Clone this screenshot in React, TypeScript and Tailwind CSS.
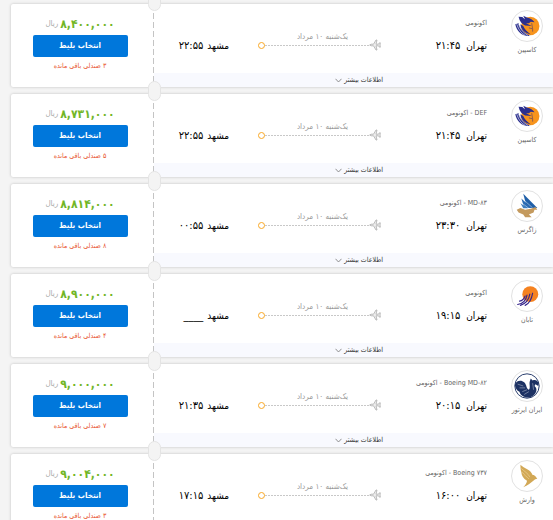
import type { ReactNode } from "react";

type Flight = {
  airline: string;
  logo: ReactNode;
  cabin: string;
  departure: string;
  arrival: string;
  price: string;
  seats: string;
};

function CaspianLogo() {
  return (
    <svg viewBox="0 0 32 32" className="size-full" aria-hidden="true">
      <circle cx="19.5" cy="16" r="9.8" fill="#f7941d" />
      <path d="M7 6 L11 6.5 L14 9 L12 5 L16 7 C20 8 22 9 24 12 L20 11.5 L18 13 L15 13 L21 16 L14 15.5 C11 14 8 11 7 6Z" fill="#2b2f8e" />
      <path d="M3.5 14 L7 13 C8 18 12 22 19 26.5 C11 27 5 22 3.5 14Z" fill="#2b2f8e" />
      <path d="M9 14 C9 19 13 23 20 25 C16 22 13 19 12 16Z" fill="#2b2f8e" />
      <path d="M21 13 L22 19 L18 18 M22 19 L22 22" fill="none" stroke="#8a5a50" strokeWidth="1" />
      <path d="M7 14 C9 20 12 23 17 26 M5 14 C7 20 10 24 14 26" fill="none" stroke="#fff" strokeWidth="0.6" />
    </svg>
  );
}

function ZagrosLogo() {
  return (
    <svg viewBox="0 0 32 32" className="size-full" aria-hidden="true">
      <path d="M12 3 L27 18 L16 18Z" fill="#1f5fa8" />
      <path d="M10 8 L21 18 L13 18Z" fill="#2a6bb3" />
      <path d="M9 13 L17 18.5 L12 18.5Z" fill="#3f7fc0" />
      <path d="M11 8 L22 18 M10 12.5 L18 18.5" stroke="#fff" strokeWidth="0.5" />
      <path d="M5 20 L9 18 L14 20 L20 19 L25 17 L27 20 L24 20 L23 23 L18 25 L21 28 L14 28 L12 25 L7 23Z" fill="#c49a5e" />
    </svg>
  );
}

function TabanLogo() {
  return (
    <svg viewBox="0 0 32 32" className="size-full" aria-hidden="true">
      <circle cx="19.5" cy="14" r="8.5" fill="#f58220" />
      <g fill="none" stroke="#34238a" strokeWidth="1.2" strokeLinecap="round">
        <path d="M6 25 C12 24 15 21 16 15" />
        <path d="M8 21.5 C11 21 13 19 14 16" />
        <path d="M9 26 C15 24 18 20 19 14" />
        <path d="M14 26 C19 24 21 19 22 13" />
      </g>
    </svg>
  );
}

function IranAirtourLogo() {
  return (
    <svg viewBox="0 0 32 32" className="size-full" aria-hidden="true">
      <circle cx="16" cy="16" r="13" fill="none" stroke="#1c3163" strokeWidth="1" />
      <path d="M3 15 C4 10 10 9 13 12 C16 15 15 19 18 20 C20 18 18 14 19 11 L20 8 L22 10 C25 9 27 10 28.5 13 L28 16 L25 14 L24 16 C28 19 26 25 20 28 C13 29 9 26 8 22 C5 21 4 19 3 15Z" fill="#1c3163" />
      <path d="M6 14 L12 16 M8 18 L14 18 M11 22 L16 20 M13 25 L18 22 M22 13 L23 20" stroke="#fff" strokeWidth="0.4" />
    </svg>
  );
}

function VareshLogo() {
  return (
    <svg viewBox="0 0 32 32" className="size-full" aria-hidden="true">
      <path d="M9 4 C13 8 20 9 22 15 C25 15 26 18 27 19 C23 19 22 24 12 28 C14 26 16 23 16 21 C12 19 10 15 10 12 C9 9 9 6 9 4Z" fill="#d2a856" />
      <path d="M10 8 C13 11 17 13 19 17 M11 12 C13 15 16 17 18 19" fill="none" stroke="#e9cd92" strokeWidth="0.8" />
    </svg>
  );
}

const flights: Flight[] = [
  { airline: "کاسپین", logo: <CaspianLogo />, cabin: "اکونومی", departure: "۲۱:۴۵", arrival: "۲۲:۵۵", price: "۸,۴۰۰,۰۰۰", seats: "۳" },
  { airline: "کاسپین", logo: <CaspianLogo />, cabin: "DEF - اکونومی", departure: "۲۱:۴۵", arrival: "۲۲:۵۵", price: "۸,۷۳۱,۰۰۰", seats: "۵" },
  { airline: "زاگرس", logo: <ZagrosLogo />, cabin: "MD-۸۳ - اکونومی", departure: "۲۳:۳۰", arrival: "۰۰:۵۵", price: "۸,۸۱۴,۰۰۰", seats: "۸" },
  { airline: "تابان", logo: <TabanLogo />, cabin: "اکونومی", departure: "۱۹:۱۵", arrival: "____", price: "۸,۹۰۰,۰۰۰", seats: "۴" },
  { airline: "ایران ایرتور", logo: <IranAirtourLogo />, cabin: "Boeing MD-۸۲ - اکونومی", departure: "۲۰:۱۵", arrival: "۲۱:۳۵", price: "۹,۰۰۰,۰۰۰", seats: "۷" },
  { airline: "وارش", logo: <VareshLogo />, cabin: "Boeing ۷۳۷ - اکونومی", departure: "۱۶:۰۰", arrival: "۱۷:۱۵", price: "۹,۰۰۴,۰۰۰", seats: "۳" },
];

function PlaneIcon() {
  return (
    <svg viewBox="0 0 12 12" className="size-3 shrink-0" fill="#eee" stroke="#adadad" strokeWidth="0.8" strokeLinejoin="round" aria-hidden="true">
      <path d="M0.7 6 L2 5.2 H4.5 L7 1 H8 L7 5.2 H9.5 L10.5 3.8 H11.3 L11 6 L11.3 8.2 H10.5 L9.5 6.8 H7 L8 11 H7 L4.5 6.8 H2Z" />
    </svg>
  );
}

function FlightCard({ flight }: { flight: Flight }) {
  return (
    <article className="relative flex h-[83px] rounded-l-xs bg-white shadow-[0_0_3px_rgba(0,0,0,0.22)]">
      <div className="flex min-w-0 flex-1 flex-col">
        <div className="flex flex-1">
          <div className="flex w-[52px] flex-col items-center pt-1.5">
            <div className="size-8 rounded-full border border-[#e2e2e2]">{flight.logo}</div>
            <span className="text-[7px] leading-4 whitespace-nowrap text-[#666]">{flight.airline}</span>
          </div>
          <div className="flex w-[120px] flex-col pt-3 pr-3.5 whitespace-nowrap">
            <span className="text-[7px] leading-[14px] text-[#666]">{flight.cabin}</span>
            <div className="flex items-center gap-1.5 pt-1.5 leading-5 text-black">
              <span className="text-[10px]">تهران</span>
              <time className="text-[11px] font-medium">{flight.departure}</time>
            </div>
          </div>
          <div className="flex flex-1 flex-col pt-7">
            <span className="pl-1.5 text-center text-[8px] leading-[10px] text-[#999]">یک‌شنبه ۱۰ مرداد</span>
            <div className="flex h-1.5 items-center">
              <PlaneIcon />
              <span className="h-px flex-1 bg-[repeating-linear-gradient(90deg,#c8c8c8_0_2px,transparent_2px_3px)]" />
              <span className="size-[7px] rounded-full border border-[#f9a825]" />
            </div>
          </div>
          <div className="flex w-[104px] items-start gap-1 pt-8 pr-[29px] leading-5 whitespace-nowrap text-black">
            <span className="text-[10px]">مشهد</span>
            <time className="text-[11px] font-medium">{flight.arrival}</time>
          </div>
        </div>
        <button type="button" className="flex h-3.5 items-center gap-0.5 bg-[#f8f9fe] pr-[170px] text-[7px] text-[#333]">
          اطلاعات بیشتر
          <svg viewBox="0 0 7 5" className="h-[5px] w-[7px]" fill="none" stroke="#777" strokeWidth="0.8" aria-hidden="true">
            <path d="M0.5 0.8 L3.5 4 L6.5 0.8" />
          </svg>
        </button>
      </div>
      <div className="w-px bg-[repeating-linear-gradient(#c4c4c4_0_6px,transparent_6px_9px)]" />
      <div className="flex w-[142px] flex-col items-center pr-1 pt-2">
        <div className="flex h-[23px] items-center gap-0.5 whitespace-nowrap">
          <strong className="text-[12px] font-bold text-[#72b626]">{flight.price}</strong>
          <span className="text-[8px] text-[#aaa]">ریال</span>
        </div>
        <button type="button" className="h-[22px] w-[95px] rounded-xs bg-[#0077db] text-[8px] font-bold text-white">
          انتخاب بلیط
        </button>
        <span className="text-[7px] leading-[18px] text-[#e8532c]">{flight.seats} صندلی باقی مانده</span>
      </div>
      <span className="absolute -top-[13px] left-[137px] h-5 w-[13px] rounded-full border border-[#e4e4e4] bg-[#f4f4f4]" />
    </article>
  );
}

export default function App() {
  return (
    <main dir="rtl" lang="fa" className="flex min-h-screen flex-col gap-[7px] bg-[#f4f4f4] pt-1 pl-[11px] font-['DejaVu_Sans_Condensed','DejaVu_Sans',sans-serif]">
      {flights.map((flight) => (
        <FlightCard key={flight.price} flight={flight} />
      ))}
    </main>
  );
}
